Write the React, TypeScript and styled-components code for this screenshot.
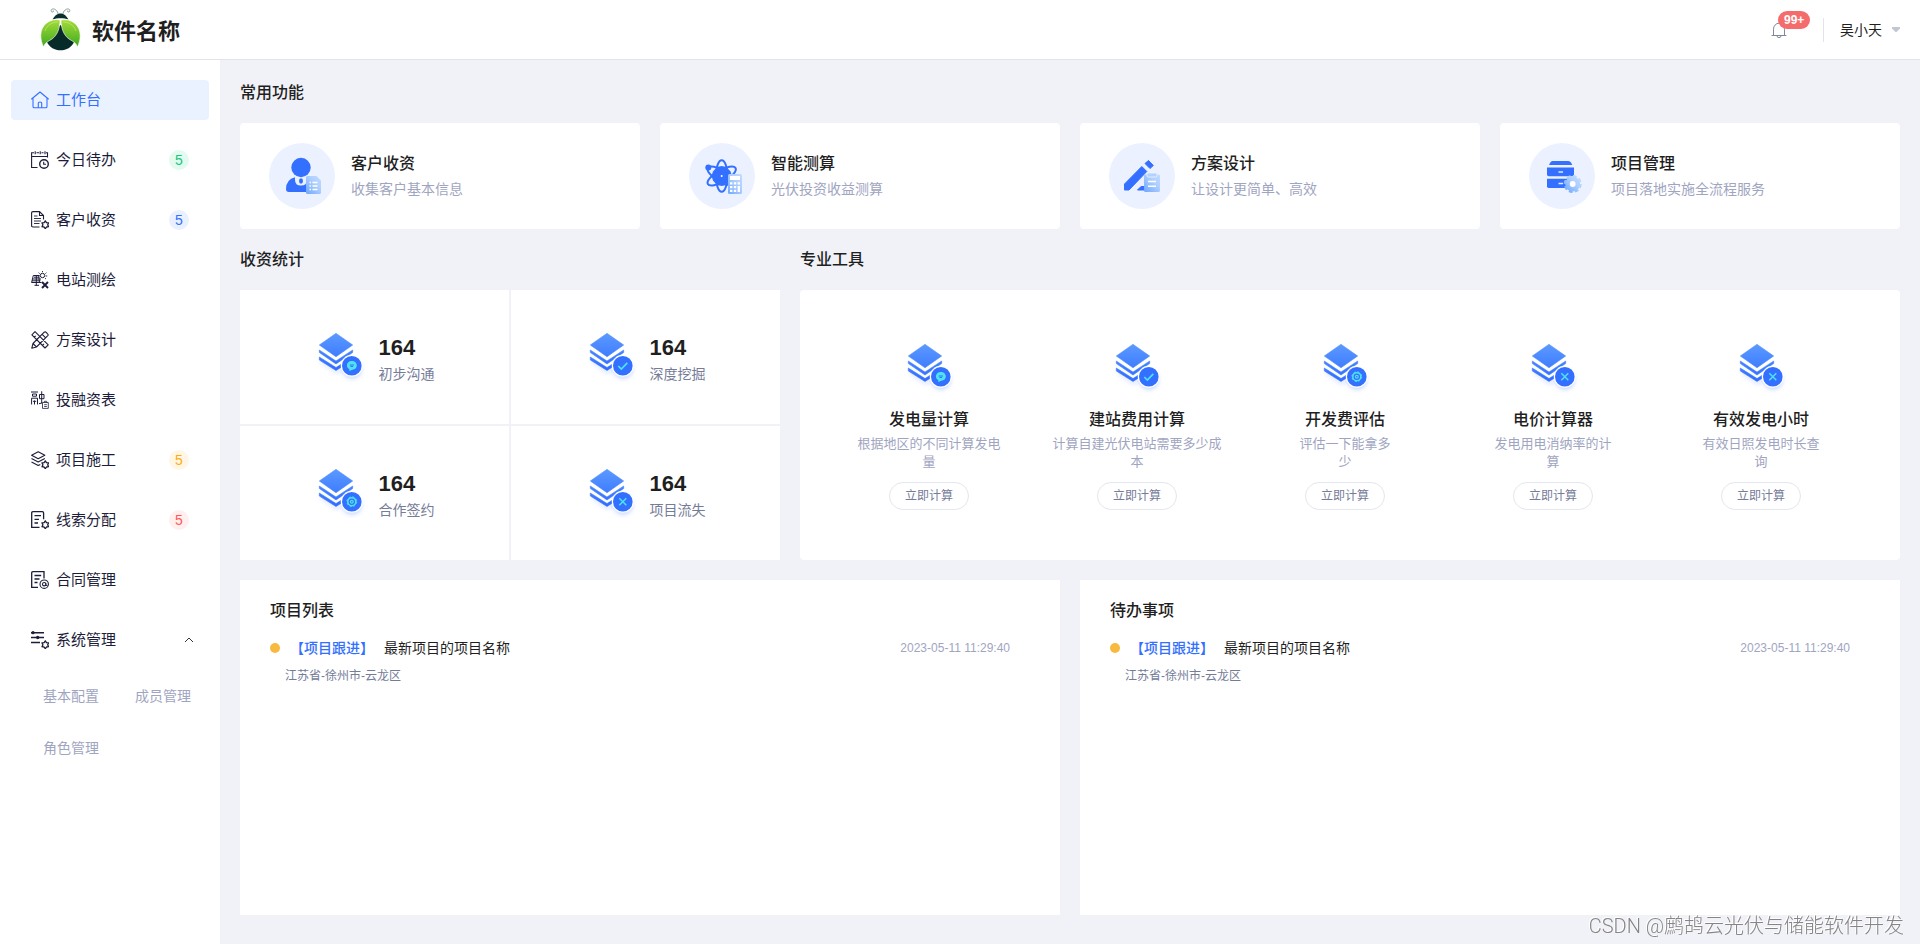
import React from "react";
import styled, { createGlobalStyle } from "styled-components";

const color = {
  page: "#f1f2f7",
  blue: "#3370ff",
  ink: "#1f1f1f",
  menu: "#1d1d3b",
  muted: "#9fa5c1",
  sub: "#757c98",
  line: "#e1e4eb",
};

const GlobalStyle = createGlobalStyle`
  *, *::before, *::after { box-sizing: border-box; }
  body {
    margin: 0;
    background: ${color.page};
    color: ${color.ink};
    font-family: "Liberation Sans", "Noto Sans CJK SC", sans-serif;
    font-size: 14px;
  }
  a { color: inherit; text-decoration: none; }
  button { font: inherit; color: inherit; background: none; border: 0; padding: 0; cursor: pointer; }
  h1, h2, h3, p, ul { margin: 0; padding: 0; font-weight: inherit; }
  ul { list-style: none; }
  svg { display: block; flex: none; }
`;

const Page = styled.div`
  display: flex;
  flex-direction: column;
  min-height: 100vh;
`;

const Header = styled.header`
  display: flex;
  align-items: center;
  justify-content: space-between;
  height: 60px;
  padding: 0 20px 0 40px;
  background: #fff;
  border-bottom: 1px solid ${color.line};
`;

const Brand = styled.a`
  display: flex;
  align-items: center;
  gap: 10px;
  font-size: 22px;
  line-height: 32px;
  font-weight: 700;
`;

const BrandName = styled.span`
  padding-top: 4px;
`;

const HeaderTools = styled.div`
  display: flex;
  align-items: center;
`;

const BellButton = styled.button`
  position: relative;
  width: 16px;
  height: 16px;
  margin-right: 36px;
`;

const BellCount = styled.span`
  position: absolute;
  left: 7px;
  bottom: 9px;
  padding: 0 6px;
  border-radius: 9px;
  background: #f56c6c;
  color: #fff;
  font-size: 12px;
  font-weight: 700;
  line-height: 18px;
`;

const UserButton = styled.button`
  display: flex;
  align-items: center;
  gap: 10px;
  height: 24px;
  padding: 0 0 2px 16px;
  border-left: 1px solid ${color.line};
`;

const Body = styled.div`
  display: flex;
  flex: 1;
`;

const Sidebar = styled.nav`
  width: 220px;
  flex: none;
  padding: 20px 11px;
  background: #fff;
`;

const MenuList = styled.ul`
  display: flex;
  flex-direction: column;
  gap: 20px;
`;

const MenuLink = styled.a<{ $active?: boolean; $group?: boolean }>`
  display: flex;
  align-items: center;
  gap: 7px;
  width: 100%;
  height: 40px;
  padding: 0 ${(p) => (p.$group ? 14 : 20)}px 0 20px;
  border-radius: 4px;
  background: ${(p) => (p.$active ? "#ebf2ff" : "transparent")};
  color: ${(p) => (p.$active ? color.blue : color.menu)};
  font-size: 15px;
  line-height: 24px;
`;

const MenuLabel = styled.span`
  flex: 1;
  text-align: left;
`;

const Count = styled.span<{ $bg: string; $fg: string }>`
  width: 20px;
  border-radius: 50%;
  background: ${(p) => p.$bg};
  color: ${(p) => p.$fg};
  font-size: 14px;
  line-height: 20px;
  text-align: center;
`;

const SubMenu = styled.ul`
  display: grid;
  grid-template-columns: 92px 1fr;
  gap: 20px 0;
  padding: 20px 0 0 32px;
  color: ${color.muted};
  line-height: 32px;
`;

const Main = styled.main`
  display: flex;
  flex: 1;
  flex-direction: column;
  min-width: 0;
  padding: 21px 20px 29px;
`;

const Heading = styled.h2`
  font-size: 16px;
  font-weight: 500;
  line-height: 24px;
`;

const SectionHeading = styled(Heading)`
  margin-bottom: 18px;
`;

const Features = styled.div`
  display: grid;
  grid-template-columns: repeat(4, 1fr);
  gap: 20px;
`;

const FeatureCard = styled.a`
  display: flex;
  align-items: center;
  gap: 16px;
  padding: 20px 29px;
  border-radius: 4px;
  background: #fff;
`;

const FeatureText = styled.div`
  padding-top: 2px;
`;

const FeatureNote = styled.p`
  color: ${color.muted};
  line-height: 26px;
`;

const MiddleRow = styled.div`
  display: grid;
  grid-template-columns: 27fr 55fr;
  gap: 20px;
  margin: 19px 0 20px;
`;

const Section = styled.section`
  display: flex;
  flex-direction: column;
`;

const Stats = styled.div`
  display: grid;
  flex: 1;
  grid-template-columns: 1fr 1fr;
  gap: 2px;
`;

const Stat = styled.div`
  display: flex;
  align-items: center;
  justify-content: center;
  gap: 14px;
  background: #fff;
`;

const StatText = styled.div`
  padding-top: 6px;
  color: ${color.sub};
  line-height: 24px;
`;

const StatValue = styled.p`
  color: ${color.ink};
  font-size: 22px;
  font-weight: 700;
  line-height: 28px;
`;

const Tools = styled.div`
  display: grid;
  grid-template-columns: repeat(5, 1fr);
  padding: 53px 35px 50px 25px;
  border-radius: 4px;
  background: #fff;
`;

const Tool = styled.div`
  display: flex;
  flex-direction: column;
  align-items: center;
  text-align: center;
`;

const ToolName = styled(Heading).attrs({ as: "h3" })`
  margin: 15px 0 3px;
`;

const ToolNote = styled.p`
  color: ${color.muted};
  font-size: 13px;
  line-height: 18px;
`;

const PillButton = styled.button`
  width: 80px;
  height: 28px;
  margin-top: 11px;
  border: 1px solid #e4e6f0;
  border-radius: 14px;
  color: ${color.sub};
  font-size: 12px;
  line-height: 26px;
`;

const BottomRow = styled.div`
  display: grid;
  flex: 1;
  grid-template-columns: 1fr 1fr;
  gap: 20px;
`;

const ListPanel = styled.section`
  padding: 19px 50px 18px 30px;
  background: #fff;
`;

const Entry = styled.div`
  display: flex;
  align-items: center;
  margin-top: 13px;
  line-height: 24px;
`;

const Dot = styled.span`
  width: 10px;
  height: 10px;
  margin-right: 10px;
  border-radius: 50%;
  background: #f7ba3e;
`;

const Tag = styled.span`
  margin-right: 10px;
  color: ${color.blue};
  font-weight: 500;
`;

const EntryTime = styled.time`
  margin-left: auto;
  color: ${color.muted};
  font-size: 12px;
`;

const EntryPlace = styled.p`
  padding: 4px 0 0 15px;
  color: ${color.sub};
  font-size: 12px;
  line-height: 24px;
`;

const Watermark = styled.div`
  position: fixed;
  right: 16px;
  bottom: 6px;
  color: #858585;
  font-family: "Liberation Sans", "Noto Sans CJK SC", sans-serif;
  font-family: Roboto, "Noto Sans CJK SC", sans-serif;
  font-size: 20px;
  font-weight: 300;
  line-height: 24px;
  text-shadow: -1px -1px 0 #fff;
  pointer-events: none;
`;

/* ---------- drawings ---------- */

const BeetleLogo = () => (
  <svg width="42" height="44" viewBox="0 0 42 44" aria-hidden="true">
    <defs>
      <linearGradient id="wing" x1="0" y1="0" x2="0" y2="1">
        <stop offset="0" stopColor="#a4dc3a" />
        <stop offset="1" stopColor="#3fa91f" />
      </linearGradient>
    </defs>
    <g fill="none" stroke="#7d9490" strokeWidth="0.9">
      <path d="M18 6.500C18 3 15 .5 12.500 1C10.500 1.500 10.800 4.300 12.800 4C13.800 3.700 13.600 2.700 13 2.700" />
      <path d="M23 6.500C23 3 26 .5 28.500 1C30.500 1.500 30.200 4.300 28.200 4C27.200 3.700 27.400 2.700 28 2.700" />
    </g>
    <path d="M12.500 11.500C15 7 18 5.500 20.500 5.500S26 7 28.500 11.500C24 9.700 17 9.700 12.500 11.500Z" fill="#0a2f2c" />
    <path d="M20.500 17C14 22 8 28 7 34C9.500 39.500 14.500 42.300 20.500 42.300S31.500 39.500 34 34C33 28 27 22 20.500 17Z" fill="#062b29" />
    <g fill="url(#wing)" stroke="#fff" strokeWidth="0.6">
      <path d="M20 12C9 10 .8 17.500 .8 27.500C.8 32 2 35.500 3.500 39C5 34.500 8 33.500 12 31C17 27.500 20 20.500 20 12Z" />
      <path d="M21 12C32 10 40.200 17.500 40.200 27.500C40.200 32 39 35.500 37.500 39C36 34.500 33 33.500 29 31C24 27.500 21 20.500 21 12Z" />
    </g>
    <path d="M5 23C7 17 12 14 18 14M36 23C34 17 29 14 23 14" fill="none" stroke="#d3f07e" strokeWidth="0.8" opacity=".7" />
  </svg>
);

const BellIcon = () => (
  <svg width="16" height="16" viewBox="0 0 16 16" fill="none" stroke="#8087a3" aria-hidden="true">
    <path d="M1 13.500H15M2.500 13V7.200A5.500 6 0 0 1 13.500 7.200V13M6 14.200A2 1.400 0 0 0 10 14.200" strokeLinecap="round" />
  </svg>
);

const MenuSvg = ({ children }: { children: React.ReactNode }) => (
  <svg width="18" height="18" viewBox="0 0 18 18" fill="none" stroke="currentColor" strokeWidth="1.100" aria-hidden="true">
    {children}
  </svg>
);

const MiniGear = () => (
  <path
    d="M14.300 9.900L15.500 11.600L17.600 11.900L16.700 13.800L17.600 15.700L15.500 16L14.300 17.700L13.100 16L11 15.700L11.900 13.800L11 11.900L13.100 11.600Z"
    strokeWidth="1.300"
    strokeLinejoin="round"
  />
);

const icons = {
  home: (
    <MenuSvg>
      <path d="M.6 8L9 1L17.400 8M2 7V15.500Q2 16.800 3.300 16.800H14.700Q16 16.800 16 15.500V7M7.300 16.500V12Q7.300 11 9 11T10.700 12V16.500" strokeLinecap="round" strokeLinejoin="round" />
    </MenuSvg>
  ),
  calendar: (
    <MenuSvg>
      <path d="M6.500 16.500H.6V1.700H3M5.500 1.700H8M10.500 1.700H12.500M15 1.700H16.500V6.500M.6 5.500H16.500M4.200 .2V3.200M9.200 .2V3.200M14 .2V3.200" />
      <circle cx="13" cy="13" r="4.300" strokeWidth="1.400" />
      <path d="M12.700 10.700V13.200H15" />
    </MenuSvg>
  ),
  file: (
    <MenuSvg>
      <path d="M8.500 16H2Q.6 16 .6 14.700V1.900Q.6 .6 2 .6H8.500L12.500 4.500V8.500M8.500 .9V4.500H12.500" />
      <path d="M3 5H6.500M3 7.500H10M3 10H10M3 12.500H8.500" strokeWidth="0.900" />
      <MiniGear />
    </MenuSvg>
  ),
  solar: (
    <MenuSvg>
      <path d="M2.300 4.500H8.500M1.500 8H10M.5 11.500H10.500M5.300 4.500V14.500M2.300 4.500L.6 11.500M7.700 4.500L8.500 11.500M3.500 14.300H8M3 6.200H8.300M1 9.800H9.500" strokeWidth="1" />
      <circle cx="11.500" cy="4.500" r="2.200" strokeWidth="1" />
      <path d="M11.500 0V1.200M7.600 1.700L8.700 2.600M15.400 1.700L14.400 2.600M14.600 5H16.200M14 7.200L15 8" strokeWidth="0.900" />
      <path d="M11 11L17 17M17 11L11 17" strokeWidth="1.900" />
    </MenuSvg>
  ),
  ruler: (
    <MenuSvg>
      <path d="M4 .7L.9 3.800L14 17L17.200 13.900ZM3.300 6.200L4.700 4.800M5.700 8.400L6.800 7.300M11.700 14.200L13 12.900M13.200 1.200L2 12.500L.8 17.200L5.500 16L16.800 4.700Q17.600 3.800 16.600 2.800L15.200 1.300Q14.200 .4 13.200 1.200ZM11.200 3.300L14.700 6.800M2 12.500L5.500 16" strokeLinejoin="round" />
    </MenuSvg>
  ),
  finance: (
    <MenuSvg>
      <path d="M0 1H7M1.500 3H5.500V5.200H1.500ZM.6 13.500V7.200H6.500V13.500M3.500 9.500V13.500M2 10.300H5.200M8.500 3.500H13V7.700H8.500ZM10.700 .3V12M8 12.700L11 12" strokeWidth="1" />
      <path d="M11.500 11.500H17.300V17.400H11.500ZM13.300 11.500V10.300H15.700V11.500M13.200 13.700H15.800M13.200 15.500H15.800" strokeWidth="0.800" />
    </MenuSvg>
  ),
  layers: (
    <MenuSvg>
      <path d="M7.200 .7L13.800 4.200L7.200 7.700L.6 4.200ZM.5 7.600L7.200 11L13.800 7.600M.5 11L7.200 14.500L9.300 13.400" strokeLinejoin="round" />
      <MiniGear />
    </MenuSvg>
  ),
  clue: (
    <MenuSvg>
      <path d="M8.500 16.400H.7V2Q.7 .7 2 .7H11.300Q12.600 .7 12.600 2V8.200M3.500 4.700H10M3.500 8.300H8M3.500 12H7" strokeWidth="1.300" />
      <MiniGear />
    </MenuSvg>
  ),
  contract: (
    <MenuSvg>
      <path d="M7 16.400H.7V2Q.7 .7 2 .7H13V7.500M3.500 4.500H10.200M3.500 8H8.500M3.500 11.500H6.500" strokeWidth="1.300" />
      <circle cx="13.200" cy="13.200" r="4.200" />
      <circle cx="13.200" cy="13.200" r="1.700" />
      <path d="M14.900 12V14.500H16.500" strokeWidth="0.900" />
    </MenuSvg>
  ),
  sliders: (
    <MenuSvg>
      <path d="M0 1.700H13M0 6.500H13M0 11.500H9" strokeWidth="1.400" />
      <circle cx="2" cy="1.700" r="1.600" fill="currentColor" stroke="none" />
      <circle cx="6.700" cy="6.500" r="1.700" fill="currentColor" stroke="none" />
      <MiniGear />
    </MenuSvg>
  ),
};

const FeatureSvg = ({ children }: { children: React.ReactNode }) => (
  <svg width="66" height="66" viewBox="0 0 66 66" aria-hidden="true">
    <defs>
      <linearGradient id="pale" x1="0" y1="1" x2="1" y2="0">
        <stop offset="0" stopColor="#6ea8ff" />
        <stop offset="0.6" stopColor="#aecfff" />
        <stop offset="1" stopColor="#c3dbff" />
      </linearGradient>
    </defs>
    <circle cx="33" cy="33" r="33" fill="#ebf1ff" />
    {children}
  </svg>
);

const featureIcons = {
  person: (
    <FeatureSvg>
      <g fill={color.blue}>
        <circle cx="32" cy="24.500" r="9.700" />
        <path d="M26 34.200V37Q26 42.500 32 42.500T38 37V34.200Q47 37 47 45V49H20Q17 49 17 46Q17 36.500 26 34.200Z" />
        <ellipse cx="32" cy="38" rx="2" ry="2.700" />
      </g>
      <path d="M38.500 33H47.500L52 37.500V49.500Q52 51 50.500 51H38.500Q37 51 37 49.500V34.500Q37 33 38.500 33Z" fill="url(#pale)" />
      <path d="M40.500 39.500H42M43.500 39.500H48.500M40.500 43H42M43.500 43H48.500M40.500 46.500H42M43.500 46.500H48.500" stroke="#fff" strokeWidth="1.300" />
    </FeatureSvg>
  ),
  atom: (
    <FeatureSvg>
      <g fill="none" stroke={color.blue} strokeWidth="2">
        <ellipse cx="32.700" cy="33" rx="5.800" ry="15.800" />
        <ellipse cx="32.700" cy="33" rx="5.800" ry="16" transform="rotate(60 32.700 33)" />
        <ellipse cx="32.700" cy="33" rx="5.800" ry="16" transform="rotate(-60 32.700 33)" />
      </g>
      <path d="M28 24L32.700 23L37.500 24L41.500 28.500L43 33L41.500 37.500L37.500 42L32.700 43L28 42L24 37.500L22.500 33L24 28.500Z" fill={color.blue} />
      <circle cx="19.300" cy="24.600" r="3" fill={color.blue} />
      <circle cx="32.700" cy="33" r="1" fill="#fff" />
      <rect x="39" y="31" width="14" height="20" rx="1.500" fill="url(#pale)" />
      <path d="M41 33H51V37H41ZM41 39.300H43.400V41.500H41ZM44.800 39.300H47.200V41.500H44.800ZM48.600 39.300H51V41.500H48.600ZM41 43H43.400V45.200H41ZM44.800 43H47.200V45.200H44.800ZM48.600 43H51V49H48.600ZM41 46.800H43.400V49H41ZM44.800 46.800H47.200V49H44.800Z" fill="#fff" />
    </FeatureSvg>
  ),
  pencil: (
    <FeatureSvg>
      <g fill={color.blue} stroke={color.blue} strokeLinejoin="round">
        <path d="M15.500 47V41L32.800 23.500L37.800 28.500L20 47Z" />
        <path d="M39.500 17.500L44.300 22.500L41 25.500L36 20.500Z" />
        <path d="M28.500 47L32 43.500H36V47Z" />
      </g>
      <rect x="35" y="31.500" width="16" height="17.500" rx="1.500" fill="url(#pale)" />
      <rect x="38" y="30" width="10" height="4" rx="1.500" fill="#b4d2ff" stroke="#ebf1ff" strokeWidth="0.900" />
      <path d="M39 38.500H47M39 43.200H47" stroke="#fff" strokeWidth="1.400" />
    </FeatureSvg>
  ),
  cabinet: (
    <FeatureSvg>
      <g fill={color.blue}>
        <path d="M23.500 18H39.500Q41 18 42 19.500L43.300 22H20L21.300 19.500Q22 18 23.500 18Z" />
        <path d="M18 24.500H45V31.500Q45 33.200 43.300 33.200H19.700Q18 33.200 18 31.500Z" />
        <path d="M18 35.700H45V43.300Q45 45 43.300 45H19.700Q18 45 18 43.300Z" />
      </g>
      <path d="M29.500 29H34M29.500 40.500H34" stroke="#dfe9ff" strokeWidth="1.300" />
      <circle cx="43.700" cy="41" r="7.500" fill="url(#pale)" />
      <circle cx="43.700" cy="41" r="7.500" fill="none" stroke="url(#pale)" strokeWidth="3" strokeDasharray="3.600 2.290" />
      <circle cx="43.700" cy="41" r="2.900" fill="#fff" />
    </FeatureSvg>
  ),
};

const marks = {
  chat: (
    <g>
      <path d="M32.800 28C29.800 28 27.900 30 27.900 32.500C27.900 34.500 29 35.500 30.300 36V38L33.500 36.800C36 36.500 37.800 34.800 37.800 32.500C37.800 30 35.800 28 32.800 28Z" fill="#4fe3ee" />
      <path d="M30.700 32H35M31.500 33.500H34" stroke={color.blue} />
    </g>
  ),
  check: <path d="M28.300 33L31.300 36L37.300 29.800" fill="none" stroke="#4fe3ee" strokeWidth="1.700" />,
  target: (
    <g fill="none" stroke="#4fe3ee">
      <circle cx="32.800" cy="32.700" r="4" strokeWidth="1.600" />
      <circle cx="32.800" cy="32.700" r="4.900" strokeWidth="1" strokeDasharray="2 1.850" />
      <circle cx="32.800" cy="32.700" r="1.400" strokeWidth="1.200" />
    </g>
  ),
  cross: <path d="M29.300 29.200L36.300 36.200M36.300 29.200L29.300 36.200" stroke="#4fe3ee" strokeWidth="1.500" />,
};

type Mark = keyof typeof marks;

const StackIcon = ({ mark }: { mark: Mark }) => (
  <svg width="50" height="50" viewBox="-4 -1 50 50" aria-hidden="true">
    <defs>
      <linearGradient id="stack" gradientUnits="userSpaceOnUse" x1="0" y1="0" x2="0" y2="38">
        <stop offset="0" stopColor="#5b9aff" />
        <stop offset="1" stopColor="#2f6bff" />
      </linearGradient>
      <filter id="soft" x="-50%" y="-50%" width="200%" height="200%">
        <feGaussianBlur stdDeviation="2" />
      </filter>
    </defs>
    <path d="M2 28L17 39L30 34" fill="none" stroke="#c3d4ff" strokeWidth="3" filter="url(#soft)" opacity=".6" />
    <circle cx="33" cy="36" r="10" fill="#a9c1ff" filter="url(#soft)" opacity=".6" />
    <g fill="url(#stack)" stroke="url(#stack)" strokeWidth="0.600" strokeLinejoin="round">
      <path d="M17 .3L33.700 12L17 23.700L.3 12Z" />
      <path d="M.3 17L17 28L33.700 17V19.500L17 31L.3 19.500Z" />
      <path d="M.3 24L17 34.500L33.700 24V27L17 37.500L.3 27Z" />
    </g>
    <circle cx="32.800" cy="32.700" r="11" fill="#fff" />
    <circle cx="32.800" cy="32.700" r="9.800" fill={color.blue} />
    {marks[mark]}
  </svg>
);

/* ---------- data ---------- */

const tints = {
  green: { $bg: "#e2fbf0", $fg: "#22c47a" },
  blue: { $bg: "#e9f0ff", $fg: "#3370ff" },
  orange: { $bg: "#fff6e5", $fg: "#ffac0d" },
  red: { $bg: "#ffefee", $fg: "#ff5a52" },
};

const menu: { label: string; icon: keyof typeof icons; tint?: keyof typeof tints }[] = [
  { label: "工作台", icon: "home" },
  { label: "今日待办", icon: "calendar", tint: "green" },
  { label: "客户收资", icon: "file", tint: "blue" },
  { label: "电站测绘", icon: "solar" },
  { label: "方案设计", icon: "ruler" },
  { label: "投融资表", icon: "finance" },
  { label: "项目施工", icon: "layers", tint: "orange" },
  { label: "线索分配", icon: "clue", tint: "red" },
  { label: "合同管理", icon: "contract" },
];

const features: { name: string; note: string; icon: keyof typeof featureIcons }[] = [
  { name: "客户收资", note: "收集客户基本信息", icon: "person" },
  { name: "智能测算", note: "光伏投资收益测算", icon: "atom" },
  { name: "方案设计", note: "让设计更简单、高效", icon: "pencil" },
  { name: "项目管理", note: "项目落地实施全流程服务", icon: "cabinet" },
];

const stats: { label: string; value: number; mark: Mark }[] = [
  { label: "初步沟通", value: 164, mark: "chat" },
  { label: "深度挖掘", value: 164, mark: "check" },
  { label: "合作签约", value: 164, mark: "target" },
  { label: "项目流失", value: 164, mark: "cross" },
];

const tools: { name: string; note: [string, string]; mark: Mark }[] = [
  { name: "发电量计算", note: ["根据地区的不同计算发电", "量"], mark: "chat" },
  { name: "建站费用计算", note: ["计算自建光伏电站需要多少成", "本"], mark: "check" },
  { name: "开发费评估", note: ["评估一下能拿多", "少"], mark: "target" },
  { name: "电价计算器", note: ["发电用电消纳率的计", "算"], mark: "cross" },
  { name: "有效发电小时", note: ["有效日照发电时长查", "询"], mark: "cross" },
];

/* ---------- page ---------- */

export default function App() {
  return (
    <Page>
      <GlobalStyle />
      <Header>
        <Brand href="#">
          <BeetleLogo />
          <BrandName>软件名称</BrandName>
        </Brand>
        <HeaderTools>
          <BellButton type="button" aria-label="消息">
            <BellIcon />
            <BellCount>99+</BellCount>
          </BellButton>
          <UserButton type="button">
            吴小天
            <svg width="8" height="14" viewBox="0 0 8 14" aria-hidden="true">
              <path d="M0 5H8V6.500L4.500 10H3.500L0 6.500Z" fill="#c3c7d4" />
            </svg>
          </UserButton>
        </HeaderTools>
      </Header>
      <Body>
        <Sidebar>
          <MenuList>
            {menu.map((item, i) => (
              <li key={item.label}>
                <MenuLink href="#" $active={i === 0}>
                  {icons[item.icon]}
                  <MenuLabel>{item.label}</MenuLabel>
                  {item.tint && <Count {...tints[item.tint]}>5</Count>}
                </MenuLink>
              </li>
            ))}
            <li>
              <MenuLink as="button" type="button" aria-expanded="true" $group>
                {icons.sliders}
                <MenuLabel>系统管理</MenuLabel>
                <svg width="12" height="12" viewBox="0 0 12 12" fill="none" stroke="#333" aria-hidden="true">
                  <path d="M2 8L6 4L10 8" />
                </svg>
              </MenuLink>
              <SubMenu>
                {["基本配置", "成员管理", "角色管理"].map((name) => (
                  <li key={name}>
                    <a href="#">{name}</a>
                  </li>
                ))}
              </SubMenu>
            </li>
          </MenuList>
        </Sidebar>
        <Main>
          <SectionHeading>常用功能</SectionHeading>
          <Features>
            {features.map((f) => (
              <FeatureCard key={f.name} href="#">
                {featureIcons[f.icon]}
                <FeatureText>
                  <Heading as="h3">{f.name}</Heading>
                  <FeatureNote>{f.note}</FeatureNote>
                </FeatureText>
              </FeatureCard>
            ))}
          </Features>
          <MiddleRow>
            <Section>
              <SectionHeading>收资统计</SectionHeading>
              <Stats>
                {stats.map((s) => (
                  <Stat key={s.label}>
                    <StackIcon mark={s.mark} />
                    <StatText>
                      <StatValue>{s.value}</StatValue>
                      <p>{s.label}</p>
                    </StatText>
                  </Stat>
                ))}
              </Stats>
            </Section>
            <Section>
              <SectionHeading>专业工具</SectionHeading>
              <Tools>
                {tools.map((t) => (
                  <Tool key={t.name}>
                    <StackIcon mark={t.mark} />
                    <ToolName>{t.name}</ToolName>
                    <ToolNote>
                      {t.note[0]}
                      <br />
                      {t.note[1]}
                    </ToolNote>
                    <PillButton type="button">立即计算</PillButton>
                  </Tool>
                ))}
              </Tools>
            </Section>
          </MiddleRow>
          <BottomRow>
            {["项目列表", "待办事项"].map((title) => (
              <ListPanel key={title}>
                <Heading>{title}</Heading>
                <Entry>
                  <Dot />
                  <Tag>【项目跟进】</Tag>
                  <a href="#">最新项目的项目名称</a>
                  <EntryTime>2023-05-11 11:29:40</EntryTime>
                </Entry>
                <EntryPlace>江苏省-徐州市-云龙区</EntryPlace>
              </ListPanel>
            ))}
          </BottomRow>
        </Main>
      </Body>
      <Watermark>CSDN @鹧鸪云光伏与储能软件开发</Watermark>
    </Page>
  );
}
